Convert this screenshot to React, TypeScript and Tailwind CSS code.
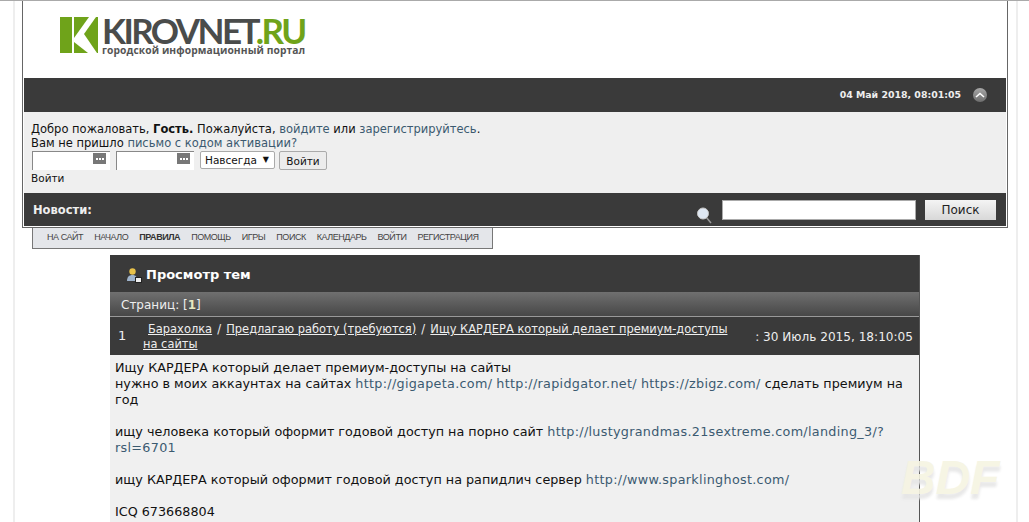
const body = { fontFamily: '"DejaVu Sans", sans-serif' };
const linkClass = "text-[#3b5a70] tracking-[.3px]";

function Logo() {
  return (
    <div className="flex items-start">
      <svg width="38" height="36" viewBox="0 0 38 36" className="shrink-0">
        <rect x="0" y="0" width="12" height="36" fill="#6fa31a" />
        <polygon points="14,0 29,0 14,21" fill="#6fa31a" />
        <polygon points="14,25 28,36 14,36" fill="#6fa31a" />
        <polygon points="38,0 38,36 37,36 24,17 36,0" fill="#6fa31a" />
      </svg>
      <div className="ml-[4px] flex flex-col items-start" style={{ fontFamily: "Lato, sans-serif" }}>
        <div className="h-[26px] text-[35px] leading-[26px] font-bold tracking-[-2.55px] whitespace-nowrap text-[#4a4c4b]">
          KIROVNET<span className="text-[#6fa31a]">.RU</span>
        </div>
        <div className="mt-[1px] text-[10.25px] leading-[12px] font-bold tracking-[.1px] whitespace-nowrap text-[#555]" style={{ fontFamily: '"Open Sans", sans-serif' }}>
          городской информационный портал
        </div>
      </div>
    </div>
  );
}

function SearchIcon() {
  return (
    <svg width="16" height="18" viewBox="0 0 16 18">
      <line x1="10" y1="11" x2="15" y2="17" stroke="#999" strokeWidth="1.5" />
      <circle cx="7" cy="7.5" r="5.5" fill="#dfe8f3" stroke="#c8c8c8" />
    </svg>
  );
}

function UserIcon() {
  return (
    <svg width="15" height="15" viewBox="0 0 15 15">
      <circle cx="5.5" cy="3.5" r="3.2" fill="#e8c24a" />
      <path d="M0 13c0-4 2-6 5.5-6S10 9 10 13z" fill="#9fb4cc" />
      <rect x="8.5" y="9.5" width="6" height="5" fill="#eee" stroke="#222" />
    </svg>
  );
}

function InputIcon() {
  return (
    <span className="absolute top-[1px] right-[4px] flex h-[11px] w-[13px] items-center justify-center gap-px bg-[#777]">
      <i className="h-[2px] w-[2px] bg-white" />
      <i className="h-[2px] w-[2px] bg-white" />
      <i className="h-[2px] w-[2px] bg-white" />
    </span>
  );
}

export default function App() {
  return (
    <div className="relative h-[522px] w-[1029px] overflow-hidden bg-white text-[12.75px] text-[#111]" style={body}>
      <div className="h-px bg-[#aaaaaa]" />
      <div className="ml-[13px] h-[521px] w-[1005px] border-x-[2px] border-x-[#eeeeee] pl-[7px] pr-[8px]">
        <div className="w-[986px] border-x border-b border-[#666] p-px pt-0">
          <div className="flex h-[77px] items-start pt-[16px] pl-[36px]">
            <Logo />
          </div>
          <div className="flex h-[34px] items-center justify-end bg-[#3a3a3a] pr-[19px] text-[9.4px] font-bold text-[#eeeeee]">
            <span>04 Май 2018, 08:01:05</span>
            <span className="ml-[12px] flex h-[14px] w-[14px] items-center justify-center rounded-full bg-gradient-to-b from-[#a8a8a8] to-[#6e6e6e]">
              <svg width="10" height="6" viewBox="0 0 10 6">
                <path d="M1 5l4-3.5L9 5" fill="none" stroke="#fff" strokeWidth="1.6" />
              </svg>
            </span>
          </div>
          <div className="h-[81px] bg-[#efefef] pt-[10px] pl-[7px] text-[11.5px] leading-[14px]">
            <div>
              Добро пожаловать, <b>Гость.</b> Пожалуйста, <a className="text-[#3b5a70]">войдите</a> или{" "}
              <a className="text-[#3b5a70]">зарегистрируйтесь</a>.
            </div>
            <div>
              Вам не пришло <a className="text-[#3b5a70]">письмо с кодом активации?</a>
            </div>
            <div className="mt-px flex h-[20px] items-start">
              <div className="relative ml-px h-[19px] w-[78px] border-t border-l border-[#888] bg-white">
                <InputIcon />
              </div>
              <div className="relative ml-[6px] h-[19px] w-[78px] border-t border-l border-[#888] bg-white">
                <InputIcon />
              </div>
              <div className="ml-[6px] flex h-[18px] w-[75px] items-center justify-between rounded-[2px] border border-[#aaa] bg-white px-[4px] text-[10.5px]">
                <span>Навсегда</span>
                <span className="pr-[1px] text-[8px]">▼</span>
              </div>
              <div className="ml-[4px] flex h-[19px] w-[48px] items-center justify-center rounded-[2px] border border-[#aaa] bg-[#ececec] text-[10.5px]">
                Войти
              </div>
            </div>
            <div className="text-[10.5px]">Войти</div>
          </div>
          <div className="flex h-[33px] items-center bg-[#3a3a3a] pl-[9px] text-[#eee]">
            <b className="pt-[2px] text-[11.5px]">Новости:</b>
            <div className="ml-auto flex items-center pr-[10px]">
              <span className="mt-[10px] mr-[10px]"><SearchIcon /></span>
              <div className="h-[20px] w-[194px] border border-[#aaa] bg-white" />
              <div className="ml-[9px] flex h-[20px] w-[71px] items-center justify-center bg-gradient-to-b from-[#f4f4f4] to-[#d8d8d8] text-[12px] text-[#222]">
                Поиск
              </div>
            </div>
          </div>
        </div>
        <div className="ml-[10px] flex h-[21px] w-[461px] items-center gap-[11px] border-x border-b border-[#777] bg-[#e4e6ea] pl-[14px] text-[9px] tracking-[-0.45px] whitespace-nowrap text-[#444]" style={{ fontFamily: '"Liberation Sans", sans-serif' }}>
          <span>НА САЙТ</span>
          <span>НАЧАЛО</span>
          <b className="text-[#333]">ПРАВИЛА</b>
          <span>ПОМОЩЬ</span>
          <span>ИГРЫ</span>
          <span>ПОИСК</span>
          <span>КАЛЕНДАРЬ</span>
          <span>ВОЙТИ</span>
          <span>РЕГИСТРАЦИЯ</span>
        </div>
        <div className="mt-[6px] ml-[88px] w-[810px] border-r border-[#555]">
          <div className="flex h-[37px] items-center bg-[#3a3a3a] pt-[3px] pl-[17px] text-[13px] font-bold text-white">
            <UserIcon />
            <span className="ml-[4px]">Просмотр тем</span>
          </div>
          <div className="flex h-[24px] items-center bg-gradient-to-b from-[#707070] to-[#474747] pt-[1px] pl-[11px] text-[12px] text-[#eee]">
            Страниц: [<b className="text-[#e8e8c0]">1</b>]
          </div>
          <div className="flex h-[39px] items-center border-t border-[#999] bg-[#3a3a3a] pr-[6px] pl-[8px] text-[#eee]">
            <span className="w-[25px] text-[13px]">1</span>
            <div className="pt-[2px] text-[11.45px] leading-[15px]">
              <div className="pl-[5px] whitespace-nowrap">
                <u>Барахолка</u>
                <span className="px-[1.5px]"> / </span>
                <u>Предлагаю работу (требуются)</u>
                <span className="px-[1.5px]"> / </span>
                <u>Ищу КАРДЕРА который делает премиум-доступы</u>
              </div>
              <div><u>на сайты</u></div>
            </div>
            <span className="ml-auto pt-[2px] text-[12.1px] whitespace-nowrap">: 30 Июль 2015, 18:10:05</span>
          </div>
          <div className="h-[170px] bg-[#f0f0f0] pt-[5px] pl-[5px] leading-[16px]">
            <div>Ищу КАРДЕРА который делает премиум-доступы на сайты</div>
            <div>
              нужно в моих аккаунтах на сайтах <a className={linkClass}>http://gigapeta.com/</a>{" "}
              <a className={linkClass}>http://rapidgator.net/</a> <a className={linkClass}>https://zbigz.com/</a> сделать премиум на год
            </div>
            <br />
            <div>
              ищу человека который оформит годовой доступ на порно сайт{" "}
              <a className={linkClass}>http://lustygrandmas.21sextreme.com/landing_3/?rsl=6701</a>
            </div>
            <br />
            <div>
              ищу КАРДЕРА который оформит годовой доступ на рапидлич сервер{" "}
              <a className={linkClass}>http://www.sparklinghost.com/</a>
            </div>
            <br />
            <div>ICQ 673668804</div>
          </div>
        </div>
      </div>
      <div className="pointer-events-none absolute top-[451px] left-[901px] text-[48px] leading-[54px] font-bold text-[#f6f4e2] italic opacity-90" style={{ fontFamily: '"Liberation Sans", sans-serif', textShadow: "0 5px 3px #e6e6e6" }}>
        BDF
      </div>
    </div>
  );
}
